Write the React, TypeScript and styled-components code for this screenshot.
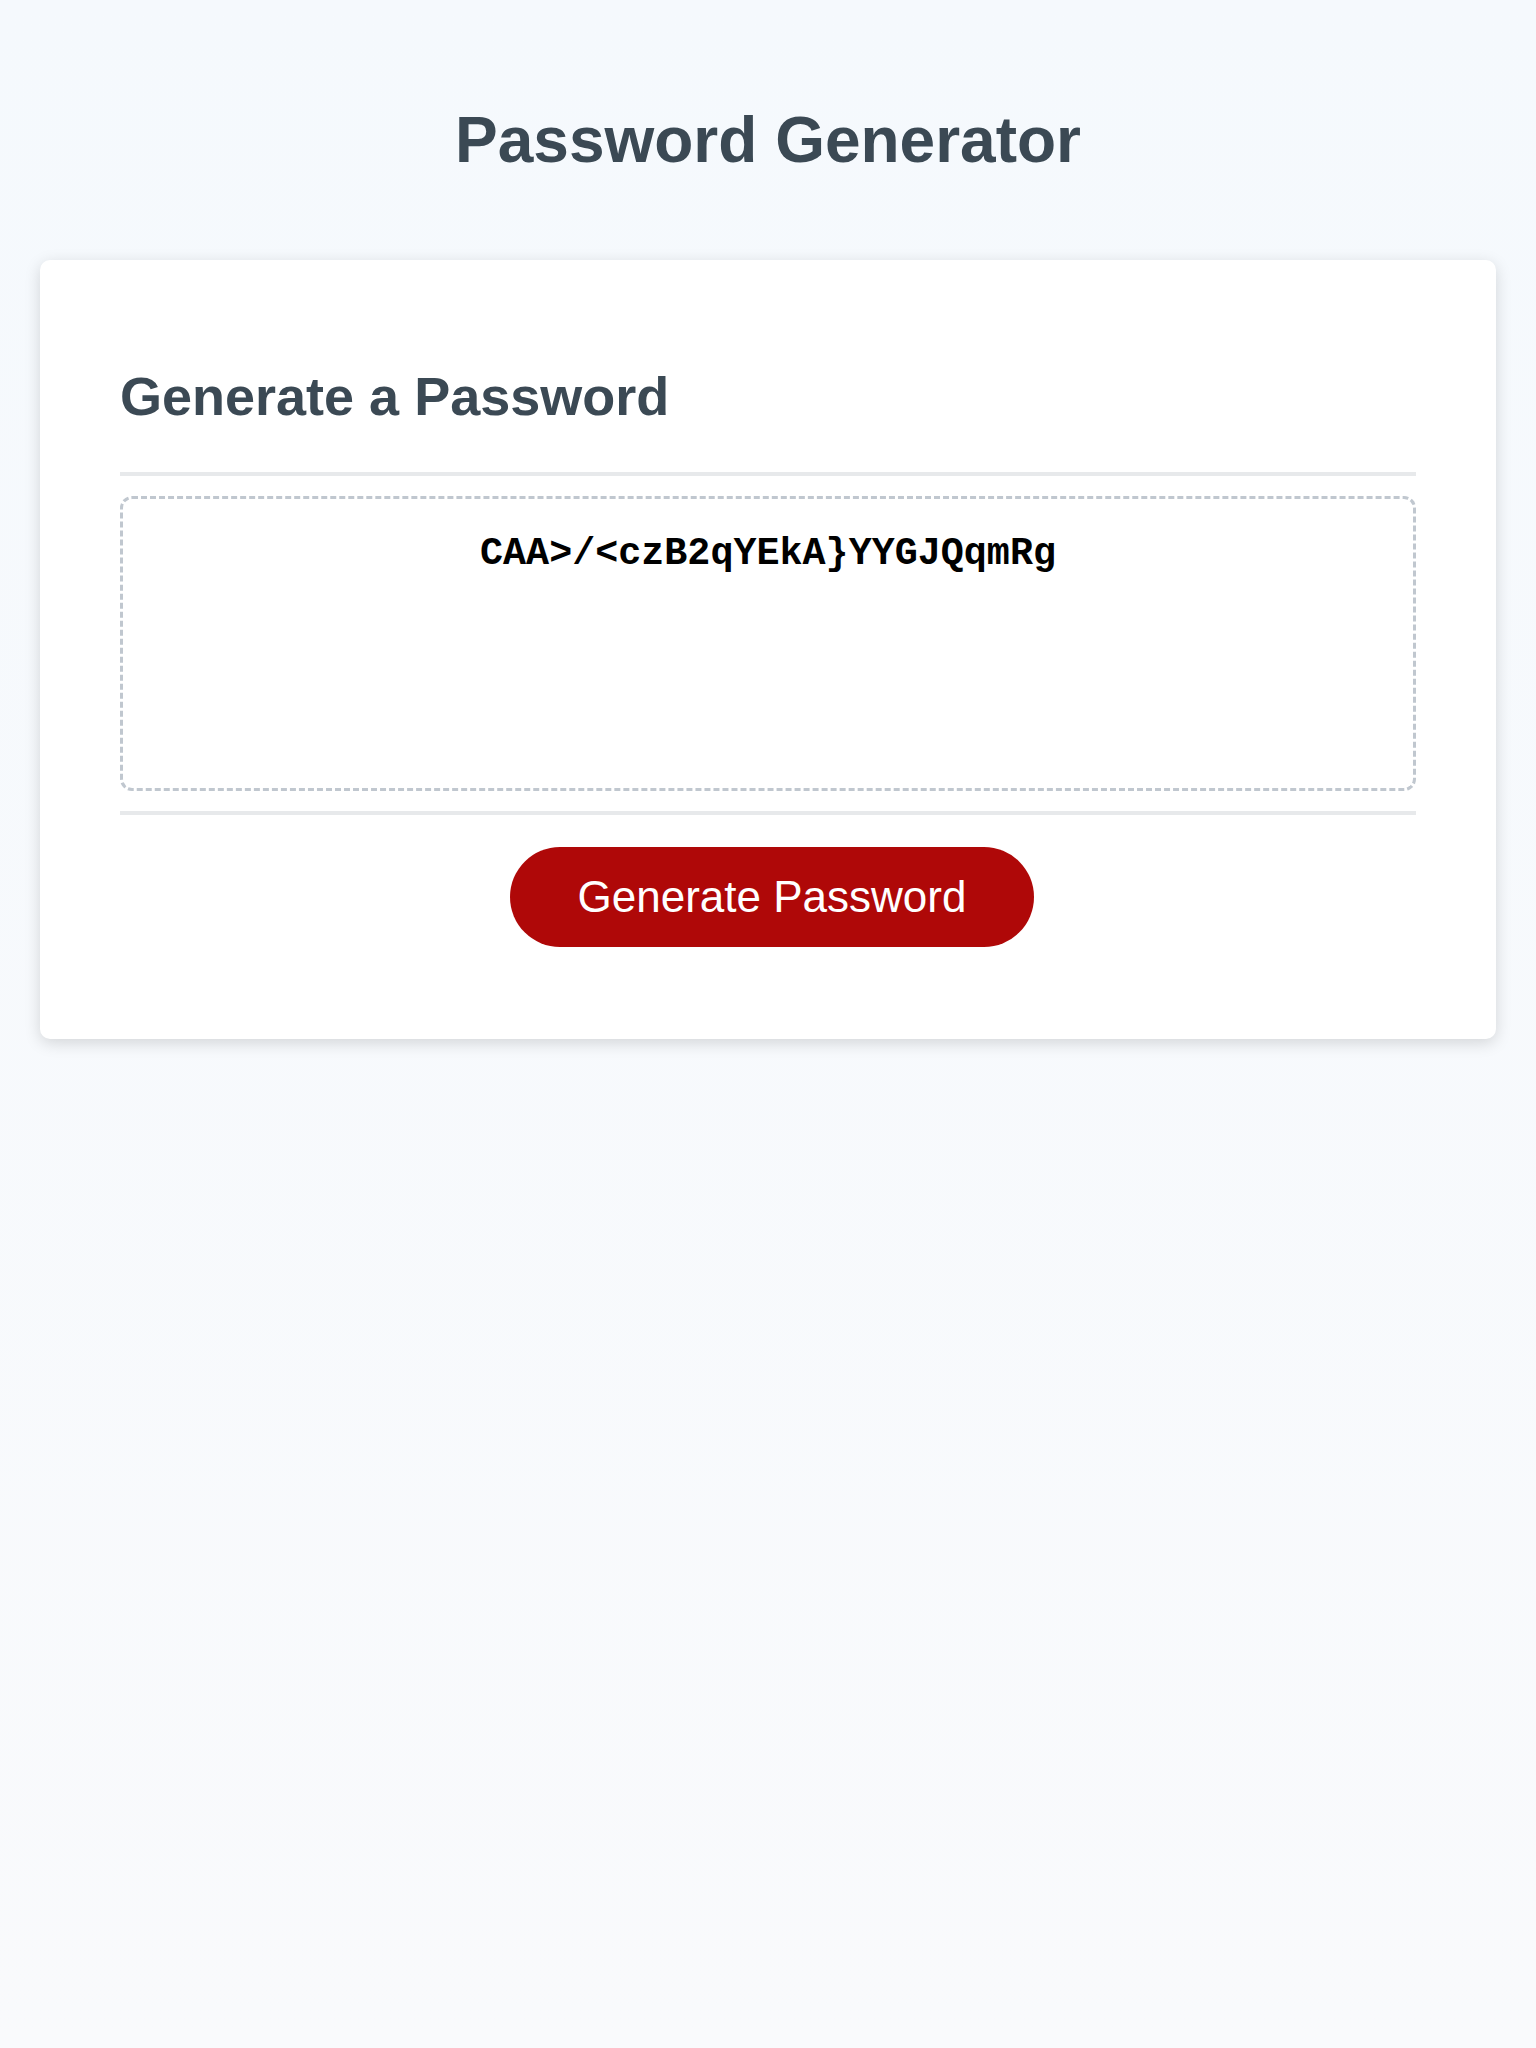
import React from "react";
import styled, { createGlobalStyle } from "styled-components";

const GlobalStyle = createGlobalStyle`
  *, *::before, *::after { box-sizing: border-box; }
  html, body { margin: 0; padding: 0; }
  body {
    font-family: "Liberation Sans", Arial, sans-serif;
    background: linear-gradient(180deg, #f5f9fd 0%, #f9fafc 100%);
    min-height: 2048px;
  }
`;

const Wrapper = styled.div`
  padding: 60px 40px 0;
  min-height: 2048px;
`;

const Header = styled.header`
  text-align: center;
  padding: 0 40px 40px;
  color: hsl(206, 17%, 28%);
`;

const Title = styled.h1`
  font-size: 64px;
  font-weight: 700;
  margin: 43px 0;
`;

const Card = styled.div`
  background: #ffffff;
  border-radius: 10px;
  box-shadow: rgba(0, 0, 0, 0.15) 0px 4px 16px 0px;
  color: hsl(206, 17%, 28%);
  font-size: 36px;
  padding: 60px 80px;
`;

const CardHeader = styled.div`
  &::after {
    content: " ";
    display: block;
    width: 100%;
    height: 4px;
    background: #e7e9eb;
  }
`;

const SubTitle = styled.h2`
  font-size: 54px;
  font-weight: 700;
  margin: 45px 0;
`;

const CardBody = styled.div`
  min-height: 200px;
`;

const PasswordArea = styled.textarea`
  appearance: none;
  display: block;
  width: 100%;
  height: 295px;
  padding: 34px 30px 166px;
  margin: 20px 0;
  font-family: "Liberation Mono", "Courier New", monospace;
  font-size: 38.4px;
  font-weight: 600;
  line-height: 43.5px;
  text-align: center;
  color: #000000;
  background: #ffffff;
  border: 3px dashed #c0c7cf;
  border-radius: 12px;
  resize: none;
  overflow: hidden;
  outline: none;
`;

const CardFooter = styled.div`
  text-align: center;
  &::before {
    content: " ";
    display: block;
    width: 100%;
    height: 4px;
    background: #e7e9eb;
  }
`;

const Button = styled.button`
  border: none;
  background-color: hsl(360, 91%, 36%);
  border-radius: 50px;
  color: #ffffff;
  display: inline-block;
  font-family: "Liberation Sans", Arial, sans-serif;
  font-size: 44px;
  line-height: 44px;
  margin: 32px 32px 32px 40px;
  padding: 28px 68px;
  text-align: center;
  cursor: pointer;
`;

export default function App() {
  return (
    <>
      <GlobalStyle />
      <Wrapper>
        <Header>
          <Title>Password Generator</Title>
        </Header>
        <Card>
          <CardHeader>
            <SubTitle>Generate a Password</SubTitle>
          </CardHeader>
          <CardBody>
            <PasswordArea
              readOnly
              value="CAA>/<czB2qYEkA}YYGJQqmRg"
              aria-label="Generated Password"
            />
          </CardBody>
          <CardFooter>
            <Button type="button">Generate Password</Button>
          </CardFooter>
        </Card>
      </Wrapper>
    </>
  );
}
